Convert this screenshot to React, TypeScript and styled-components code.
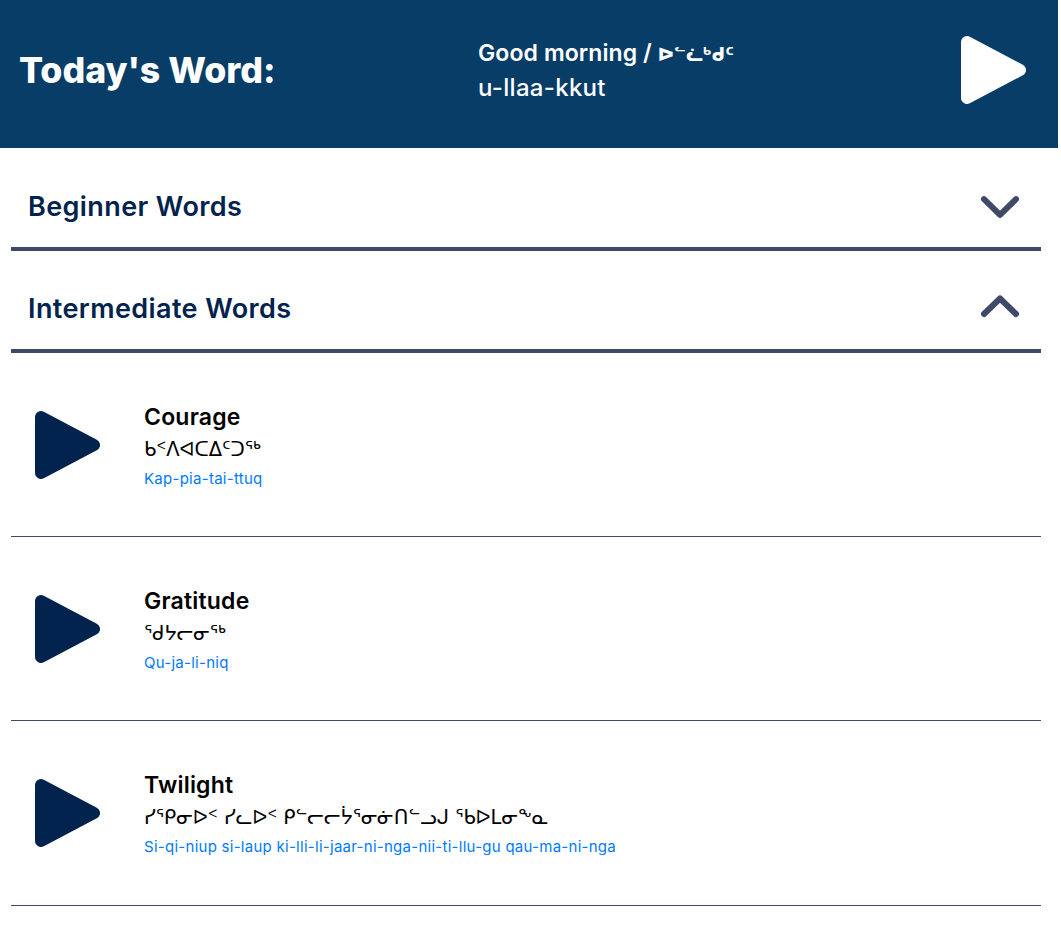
import React from "react";
import styled, { createGlobalStyle } from "styled-components";

const GlobalStyle = createGlobalStyle`
	html, body {
		margin: 0;
		padding: 0;
		background: #ffffff;
		font-family: "Inter", "DejaVu Sans", sans-serif;
	}
`;

const Page = styled.div`
	width: 1058px;
`;

const Banner = styled.header`
	height: 148px;
	background: #083d68;
	color: #ffffff;
	display: grid;
	grid-template-columns: 459px 1fr auto;
	align-items: center;
	padding: 0 31px 8px 19px;
	box-sizing: border-box;
`;

const BannerTitle = styled.h1`
	margin: 0;
	font-size: 35.7px;
	font-weight: 800;
`;

const BannerWord = styled.div`
	font-size: 23px;
	font-weight: 600;
	line-height: 33px;
	letter-spacing: 0.1px;
`;

const BannerSyllabics = styled.span`
	font-family: "DejaVu Sans", sans-serif;
	font-size: 18px;
	letter-spacing: 0;
`;

const BannerRoman = styled.div`
	font-size: 24px;
	font-weight: 500;
	line-height: 33px;
	letter-spacing: 0.3px;
`;

const Sections = styled.main`
	padding: 0 17px 0 11px;
`;

const SectionHeader = styled.div`
	height: 102.5px;
	box-sizing: border-box;
	display: flex;
	align-items: center;
	justify-content: space-between;
	padding: 18px 21px 0 17px;
	border-bottom: 4px solid #3e4a68;
`;

const SectionTitle = styled.h2`
	margin: 0;
	font-size: 27px;
	font-weight: 600;
	letter-spacing: 0.4px;
	color: #02234d;
`;

const WordRow = styled.div`
	height: 184.2px;
	box-sizing: border-box;
	display: flex;
	align-items: center;
	gap: 43px;
	padding-left: 22px;
	border-bottom: 1px solid #3e4a68;
`;

const WordText = styled.div`
	display: flex;
	flex-direction: column;
	padding-top: 3px;
`;

const WordName = styled.div`
	font-size: 23px;
	font-weight: 600;
	line-height: 33px;
	letter-spacing: 0.2px;
	color: #000000;
`;

const WordSyllabics = styled.div`
	font-family: "DejaVu Sans", sans-serif;
	font-size: 19.5px;
	line-height: 31px;
	color: #000000;
`;

const WordRoman = styled.div`
	font-size: 15px;
	line-height: 27px;
	letter-spacing: 0.27px;
	color: #007bff;
`;

const PlayIcon: React.FC<{ color: string }> = ({ color }) => (
	<svg width="68" height="72" viewBox="0 0 68 72">
		<path
			d="M8 8 L61 36 L8 64 Z"
			fill={color}
			stroke={color}
			strokeWidth="12"
			strokeLinejoin="round"
		/>
	</svg>
);

const Chevron: React.FC<{ up?: boolean }> = ({ up }) => (
	<svg width="40" height="30" viewBox="0 0 40 30">
		<path
			d={up ? "M4 20 L20 4.5 L36 20" : "M4 8.2 L20 23.8 L36 8.2"}
			fill="none"
			stroke="#3e4a68"
			strokeWidth="6"
			strokeLinecap="round"
			strokeLinejoin="round"
		/>
	</svg>
);

const words = [
	{ name: "Courage", syllabics: "ᑲᑉᐱᐊᑕᐃᑦᑐᖅ", roman: "Kap-pia-tai-ttuq" },
	{ name: "Gratitude", syllabics: "ᖁᔭᓕᓂᖅ", roman: "Qu-ja-li-niq" },
	{
		name: "Twilight",
		syllabics: "ᓯᕿᓂᐅᑉ ᓯᓚᐅᑉ ᑭᓪᓕᓕᔮᕐᓂᓃᑎᓪᓗᒍ ᖃᐅᒪᓂᖕᓇ",
		roman: "Si-qi-niup si-laup ki-lli-li-jaar-ni-nga-nii-ti-llu-gu qau-ma-ni-nga",
	},
];

export default function App() {
	return (
		<Page>
			<GlobalStyle />
			<Banner>
				<BannerTitle>Today's Word:</BannerTitle>
				<div>
					<BannerWord>
						Good morning / <BannerSyllabics>ᐅᓪᓛᒃᑯᑦ</BannerSyllabics>
					</BannerWord>
					<BannerRoman>u-llaa-kkut</BannerRoman>
				</div>
				<PlayIcon color="#ffffff" />
			</Banner>
			<Sections>
				<SectionHeader>
					<SectionTitle>Beginner Words</SectionTitle>
					<Chevron />
				</SectionHeader>
				<SectionHeader>
					<SectionTitle>Intermediate Words</SectionTitle>
					<Chevron up />
				</SectionHeader>
				{words.map((word) => (
					<WordRow key={word.name}>
						<PlayIcon color="#02234d" />
						<WordText>
							<WordName>{word.name}</WordName>
							<WordSyllabics>{word.syllabics}</WordSyllabics>
							<WordRoman>{word.roman}</WordRoman>
						</WordText>
					</WordRow>
				))}
			</Sections>
		</Page>
	);
}
